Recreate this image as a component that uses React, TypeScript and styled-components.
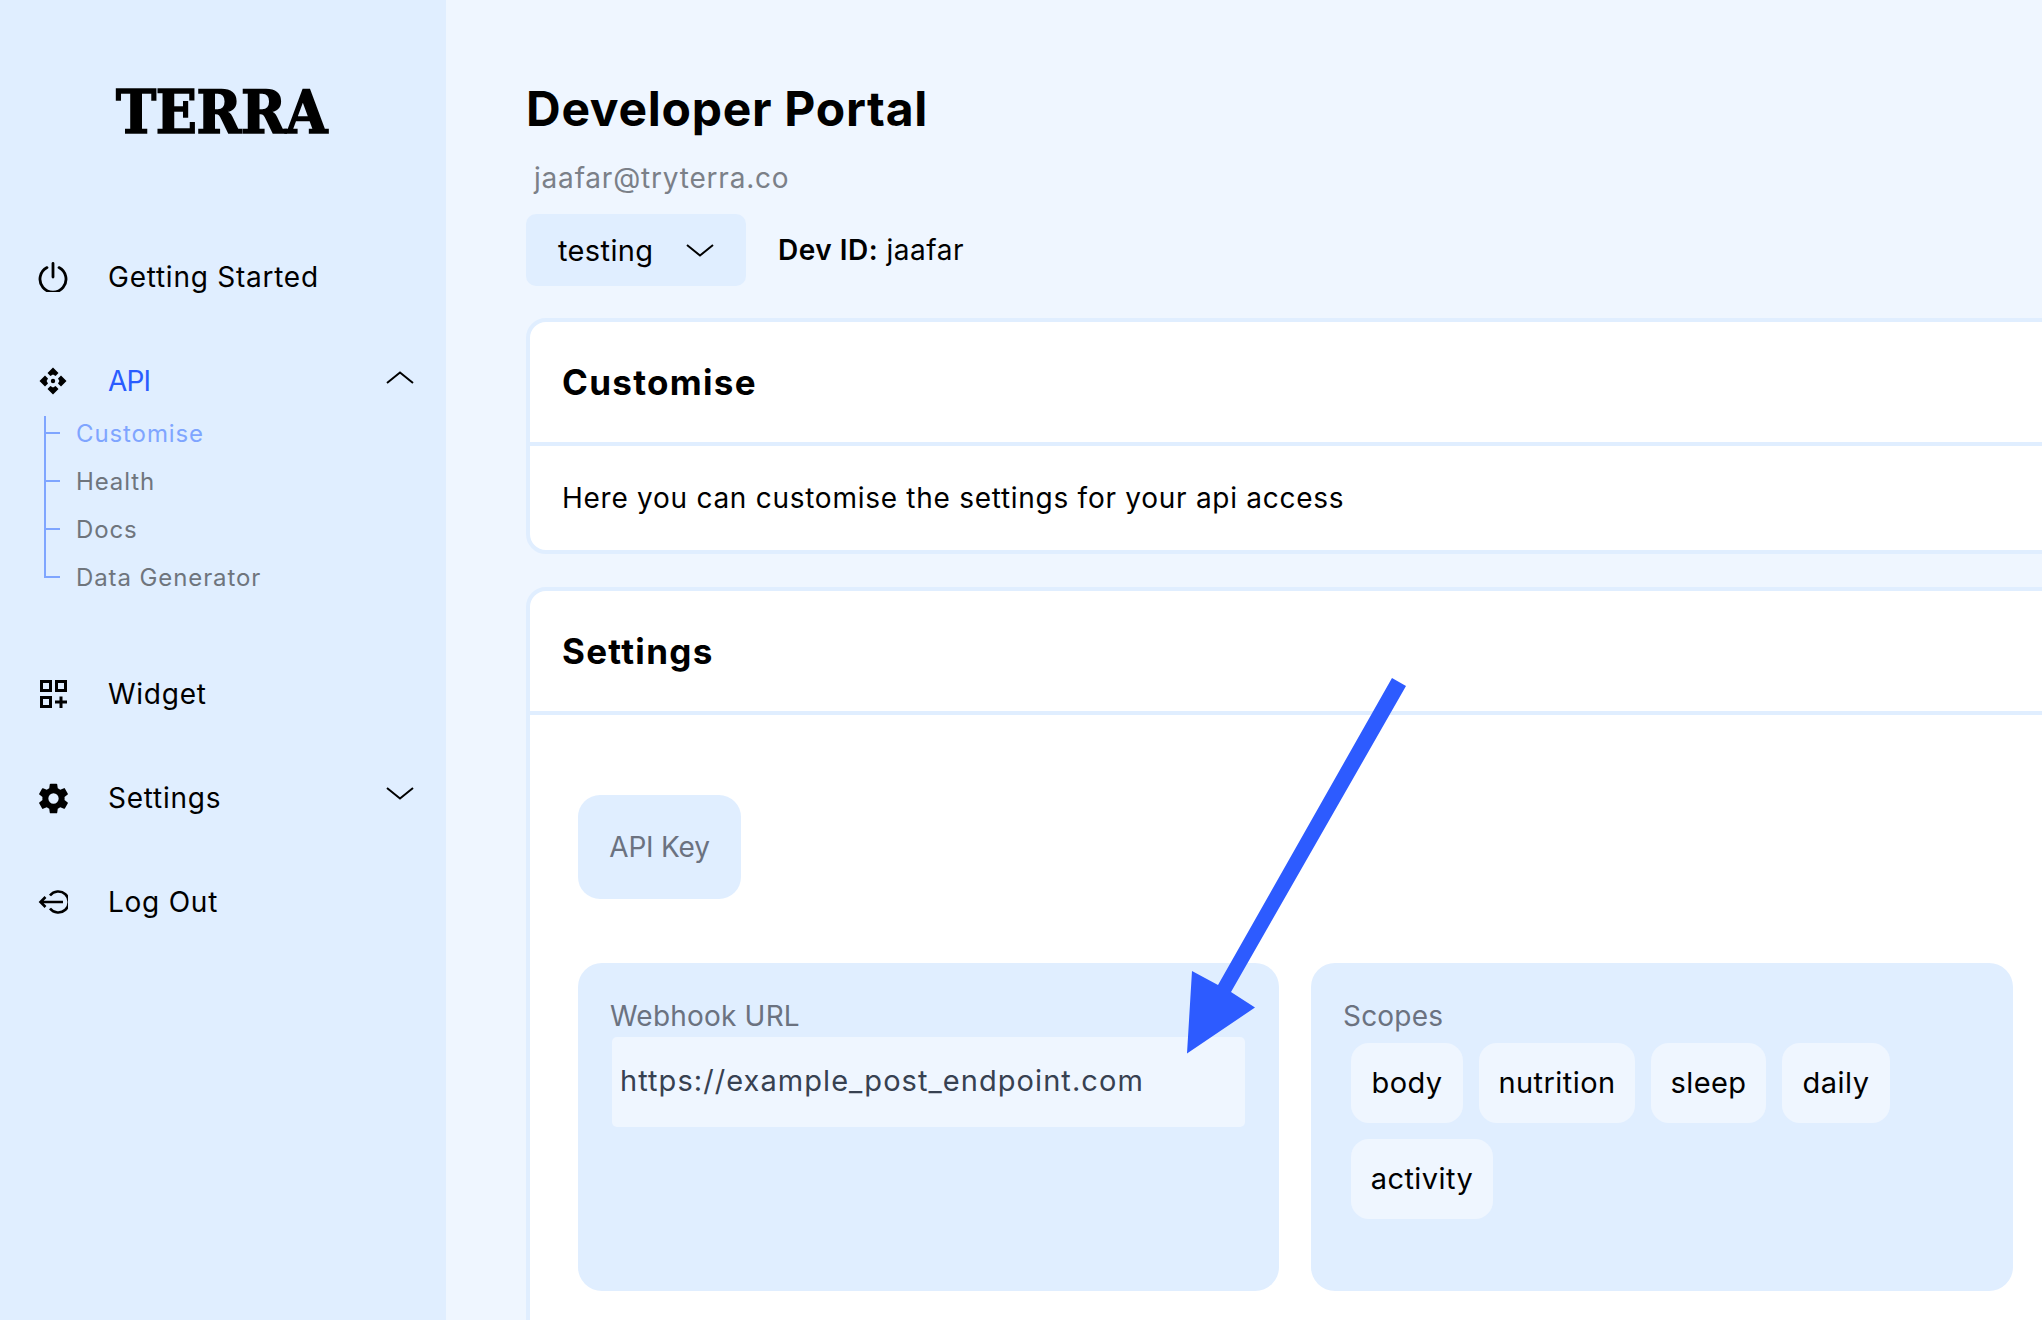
import React from "react";
import styled, { createGlobalStyle } from "styled-components";
import { IoSettingsSharp } from "react-icons/io5";

const GlobalStyle = createGlobalStyle`
  html, body {
    margin: 0;
    padding: 0;
    background: #eff6ff;
  }
  body {
    font-family: Inter, "Noto Sans", sans-serif;
    color: #000;
  }
`;

const Page = styled.div`
  position: relative;
  display: flex;
  width: 2042px;
  height: 1320px;
  overflow: hidden;
  background: #eff6ff;
`;

const Sidebar = styled.aside`
  flex: none;
  width: 446px;
  padding: 82px 32px 0 38px;
  box-sizing: border-box;
  background: #e0eeff;
`;

const Logo = styled.div`
  height: 60px;
  margin-left: 78px;
  font-family: "DejaVu Serif Condensed", "DejaVu Serif", serif;
  font-size: 60px;
  font-weight: 700;
  line-height: 60px;
  letter-spacing: -0.4px;
  -webkit-text-stroke: 1.6px #000;
`;

const Nav = styled.nav`
  display: flex;
  flex-direction: column;
  gap: 48px;
  margin-top: 107px;
`;

const NavRow = styled.div`
  display: flex;
  align-items: center;
  gap: 40px;
  height: 56px;
`;

const IconBox = styled.span`
  flex: none;
  display: flex;
  width: 30px;
  height: 30px;
`;

const GearIcon = styled(IoSettingsSharp)`
  flex: none;
  width: 33px;
  height: 33px;
  margin: -1.5px;
`;

const NavLabel = styled.span<{ $active?: boolean }>`
  flex: 1;
  font-size: 28px;
  letter-spacing: ${({ $active }) => ($active ? "-0.9px" : "0.75px")};
  color: ${({ $active }) => ($active ? "#2a5cff" : "#000")};
`;

const Chevron = styled.svg<{ $lift?: number }>`
  flex: none;
  width: 28px;
  height: 13px;
  margin-bottom: ${({ $lift }) => $lift ?? 0}px;
`;

const NavGroup = styled.div`
  padding-bottom: 17px;
`;

const SubList = styled.div`
  display: flex;
  flex-direction: column;
  margin-left: 6px;
`;

const SubItem = styled.div<{ $active?: boolean }>`
  display: flex;
  align-items: center;
  gap: 16px;
  height: 48px;
  font-size: 24px;
  letter-spacing: 0.9px;
  color: ${({ $active }) => ($active ? "#7fa5ff" : "#6f757d")};
`;

const Branch = styled.span<{ $pos: "first" | "mid" | "last" }>`
  flex: none;
  align-self: stretch;
  width: 16px;
  background:
    linear-gradient(#7fa5ff, #7fa5ff) left center / 16px 2px no-repeat,
    linear-gradient(#7fa5ff, #7fa5ff)
      ${({ $pos }) =>
        $pos === "first"
          ? "left bottom / 2px 41px"
          : $pos === "last"
            ? "left top / 2px 25px"
            : "left top / 2px 100%"}
      no-repeat;
`;

const Main = styled.main`
  flex: 1;
  min-width: 0;
  padding: 79px 0 0 80px;
`;

const Title = styled.h1`
  margin: 0;
  font-size: 48px;
  font-weight: 700;
  line-height: 60px;
  letter-spacing: 0.72px;
`;

const Email = styled.div`
  margin: 19px 0 0 8px;
  font-size: 28px;
  line-height: 40px;
  letter-spacing: 0.8px;
  color: #7b8088;
`;

const Toolbar = styled.div`
  display: flex;
  align-items: center;
  gap: 32px;
  margin-top: 16px;
`;

const EnvSelect = styled.div`
  display: flex;
  align-items: center;
  gap: 33px;
  width: 220px;
  height: 72px;
  padding-left: 32px;
  box-sizing: border-box;
  border-radius: 10px;
  background: #e0eeff;
  font-size: 29px;
  letter-spacing: 0.37px;
`;

const DevId = styled.div`
  font-size: 28px;
  letter-spacing: 0.5px;
  b {
    font-weight: 600;
  }
`;

const Card = styled.section`
  width: 1640px;
  margin-top: 32px;
  border: 4px solid #e0eeff;
  border-radius: 20px;
  background: #fff;
  & + & {
    margin-top: 33px;
  }
`;

const CardHeader = styled.header`
  display: flex;
  align-items: center;
  height: 120px;
  padding-left: 32px;
  border-bottom: 4px solid #e0eeff;
  font-size: 35px;
  font-weight: 700;
  letter-spacing: 1.3px;
`;

const CardText = styled.p`
  display: flex;
  align-items: center;
  height: 104px;
  margin: 0;
  padding-left: 32px;
  font-size: 28px;
  letter-spacing: 0.73px;
`;

const SettingsBody = styled.div`
  width: 1435px;
  padding: 80px 0 100px 48px;
`;

const ApiKey = styled.div`
  display: flex;
  align-items: center;
  justify-content: center;
  width: 163px;
  height: 104px;
  border-radius: 22px;
  background: #e0eeff;
  font-size: 28px;
  letter-spacing: -0.2px;
  color: #6b7280;
`;

const FieldGrid = styled.div`
  display: grid;
  grid-template-columns: 701px 702px;
  gap: 32px;
  margin-top: 64px;
`;

const Field = styled.div`
  height: 328px;
  padding: 34px 32px 0;
  box-sizing: border-box;
  border-radius: 24px;
  background: #e0eeff;
`;

const FieldLabel = styled.div`
  font-size: 28px;
  line-height: 38px;
  letter-spacing: 0.2px;
  color: #6b7280;
`;

const UrlInput = styled.div`
  display: flex;
  align-items: center;
  width: 633px;
  height: 90px;
  margin: 2px 0 0 2px;
  padding: 0 0 4px 8px;
  box-sizing: border-box;
  border-radius: 5px;
  background: #eff6ff;
  font-size: 29px;
  letter-spacing: 1.06px;
  color: #374151;
`;

const ChipWrap = styled.div`
  display: flex;
  flex-wrap: wrap;
  gap: 16px;
  margin: 8px 0 0 8px;
`;

const Chip = styled.div<{ $width: number }>`
  display: flex;
  align-items: center;
  justify-content: center;
  width: ${({ $width }) => $width}px;
  height: 80px;
  padding-bottom: 2px;
  box-sizing: border-box;
  border-radius: 18px;
  background: #eff6ff;
  font-size: 29px;
  letter-spacing: 0.45px;
`;

const Arrow = styled.svg`
  position: absolute;
  left: 1180px;
  top: 670px;
  width: 235px;
  height: 390px;
`;

const iconStroke = {
  fill: "none",
  stroke: "#000",
  strokeWidth: 2.8,
} as const;

const PowerIcon = () => (
  <svg viewBox="0 0 30 30" width="30" height="30" {...iconStroke} strokeLinecap="round">
    <path d="M9 5.6A13 13 0 1 0 21 5.6" />
    <path d="M15 1.5V15" />
  </svg>
);

const ApiIcon = () => (
  <svg viewBox="0 0 30 30" width="30" height="30" fill="#000">
    {[0, 90, 180, 270].map((angle) => (
      <path
        key={angle}
        transform={`rotate(${angle} 15 15)`}
        d="M15 1.5 L20.5 7 L17.6 10 L15 8.6 L12.4 10 L9.5 7 Z"
      />
    ))}
    <circle cx="15" cy="15" r="2.2" />
  </svg>
);

const WidgetIcon = () => (
  <svg viewBox="0 0 30 30" width="30" height="30" {...iconStroke} strokeWidth="3">
    <rect x="3.5" y="2.5" width="9" height="9" />
    <rect x="18.5" y="2.5" width="9" height="9" />
    <rect x="3.5" y="18.5" width="9" height="9" />
    <path d="M23 17.5V29M17 23H29" />
  </svg>
);

const LogoutIcon = () => (
  <svg viewBox="0 0 30 30" width="30" height="30" {...iconStroke} strokeWidth="2.6">
    <path d="M12 8.5A10.5 10.5 0 1 1 12 21.5" />
    <path d="M2.5 15H25M7.5 10L2.5 15L7.5 20" />
  </svg>
);

const ChevronIcon = ({ up, lift }: { up?: boolean; lift?: number }) => (
  <Chevron viewBox="0 0 28 13" $lift={lift} fill="none" stroke="#000" strokeWidth="2">
    <polyline points={up ? "1,12 14,1.5 27,12" : "1,1 14,11.5 27,1"} />
  </Chevron>
);

const subItems = ["Customise", "Health", "Docs", "Data Generator"];
const scopes: [string, number][] = [
  ["body", 112],
  ["nutrition", 156],
  ["sleep", 115],
  ["daily", 108],
  ["activity", 142],
];

export default function App() {
  return (
    <Page>
      <GlobalStyle />
      <Sidebar>
        <Logo>TERRA</Logo>
        <Nav>
          <NavRow>
            <IconBox><PowerIcon /></IconBox>
            <NavLabel>Getting Started</NavLabel>
          </NavRow>
          <NavGroup>
            <NavRow>
              <IconBox><ApiIcon /></IconBox>
              <NavLabel $active>API</NavLabel>
              <ChevronIcon up lift={8} />
            </NavRow>
            <SubList>
              {subItems.map((item, i) => (
                <SubItem key={item} $active={i === 0}>
                  <Branch $pos={i === 0 ? "first" : i === subItems.length - 1 ? "last" : "mid"} />
                  {item}
                </SubItem>
              ))}
            </SubList>
          </NavGroup>
          <NavRow>
            <IconBox><WidgetIcon /></IconBox>
            <NavLabel>Widget</NavLabel>
          </NavRow>
          <NavRow>
            <IconBox><GearIcon /></IconBox>
            <NavLabel>Settings</NavLabel>
            <ChevronIcon lift={10} />
          </NavRow>
          <NavRow>
            <IconBox><LogoutIcon /></IconBox>
            <NavLabel>Log Out</NavLabel>
          </NavRow>
        </Nav>
      </Sidebar>
      <Main>
        <Title>Developer Portal</Title>
        <Email>jaafar@tryterra.co</Email>
        <Toolbar>
          <EnvSelect>
            testing
            <ChevronIcon />
          </EnvSelect>
          <DevId><b>Dev ID:</b> jaafar</DevId>
        </Toolbar>
        <Card>
          <CardHeader>Customise</CardHeader>
          <CardText>Here you can customise the settings for your api access</CardText>
        </Card>
        <Card>
          <CardHeader>Settings</CardHeader>
          <SettingsBody>
            <ApiKey>API Key</ApiKey>
            <FieldGrid>
              <Field>
                <FieldLabel>Webhook URL</FieldLabel>
                <UrlInput>https://example_post_endpoint.com</UrlInput>
              </Field>
              <Field>
                <FieldLabel>Scopes</FieldLabel>
                <ChipWrap>
                  {scopes.map(([name, width]) => (
                    <Chip key={name} $width={width}>{name}</Chip>
                  ))}
                </ChipWrap>
              </Field>
            </FieldGrid>
          </SettingsBody>
        </Card>
      </Main>
      <Arrow viewBox="0 0 235 390" fill="#2d5bff">
        <polygon points="212,8 226,16 51,322 75,337.5 7,383.6 12,301 38,315" />
      </Arrow>
    </Page>
  );
}
